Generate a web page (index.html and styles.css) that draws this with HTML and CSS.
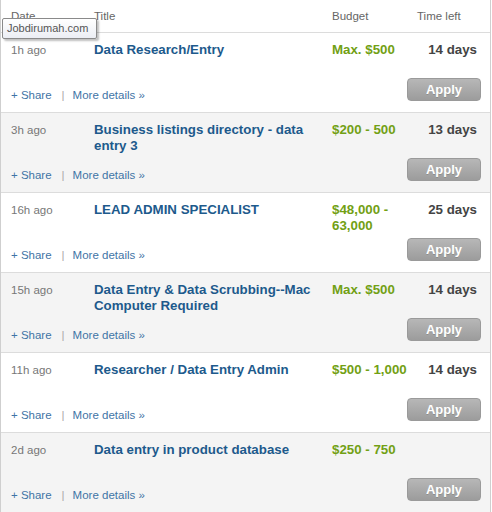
FILE: index.html
```html
<!DOCTYPE html>
<html>
<head>
<meta charset="utf-8">
<link rel="stylesheet" href="styles.css">
</head>
<body>
<div class="board">
  <div class="head">
    <div class="c-date">Date</div>
    <div class="c-title">Title</div>
    <div class="c-budget">Budget</div>
    <div class="c-time">Time left</div>
  </div>
  <div class="tip">Jobdirumah.com</div>

  <div class="job">
    <div class="top">
      <div class="c-date date">1h ago</div>
      <div class="c-title title">Data Research/Entry</div>
      <div class="c-budget budget">Max. $500</div>
      <div class="c-time days">14 days</div>
    </div>
    <div class="bottom">
      <div class="links"><a>+ Share</a><span class="sep">|</span><a>More details »</a></div>
      <button class="apply">Apply</button>
    </div>
  </div>

  <div class="job alt">
    <div class="top">
      <div class="c-date date">3h ago</div>
      <div class="c-title title">Business listings directory - data entry 3</div>
      <div class="c-budget budget">$200 - 500</div>
      <div class="c-time days">13 days</div>
    </div>
    <div class="bottom">
      <div class="links"><a>+ Share</a><span class="sep">|</span><a>More details »</a></div>
      <button class="apply">Apply</button>
    </div>
  </div>

  <div class="job">
    <div class="top">
      <div class="c-date date">16h ago</div>
      <div class="c-title title">LEAD ADMIN SPECIALIST</div>
      <div class="c-budget budget">$48,000 - 63,000</div>
      <div class="c-time days">25 days</div>
    </div>
    <div class="bottom">
      <div class="links"><a>+ Share</a><span class="sep">|</span><a>More details »</a></div>
      <button class="apply">Apply</button>
    </div>
  </div>

  <div class="job alt">
    <div class="top">
      <div class="c-date date">15h ago</div>
      <div class="c-title title">Data Entry &amp; Data Scrubbing--Mac Computer Required</div>
      <div class="c-budget budget">Max. $500</div>
      <div class="c-time days">14 days</div>
    </div>
    <div class="bottom">
      <div class="links"><a>+ Share</a><span class="sep">|</span><a>More details »</a></div>
      <button class="apply">Apply</button>
    </div>
  </div>

  <div class="job">
    <div class="top">
      <div class="c-date date">11h ago</div>
      <div class="c-title title">Researcher / Data Entry Admin</div>
      <div class="c-budget budget">$500 - 1,000</div>
      <div class="c-time days">14 days</div>
    </div>
    <div class="bottom">
      <div class="links"><a>+ Share</a><span class="sep">|</span><a>More details »</a></div>
      <button class="apply">Apply</button>
    </div>
  </div>

  <div class="job alt">
    <div class="top">
      <div class="c-date date">2d ago</div>
      <div class="c-title title">Data entry in product database</div>
      <div class="c-budget budget">$250 - 750</div>
      <div class="c-time days"></div>
    </div>
    <div class="bottom">
      <div class="links"><a>+ Share</a><span class="sep">|</span><a>More details »</a></div>
      <button class="apply">Apply</button>
    </div>
  </div>
</div>
</body>
</html>
```

FILE: styles.css
```css
* { box-sizing: border-box; }
html, body { margin: 0; padding: 0; background: #fff; }
body {
  font-family: "Liberation Sans", Arial, sans-serif;
  width: 492px;
  height: 512px;
  overflow: hidden;
}
.board {
  position: relative;
  width: 491px;
  border-left: 1px solid #cfcfcf;
  border-right: 1px solid #cfcfcf;
}
.head, .top {
  display: grid;
  grid-template-columns: 83px 238px 85px 64px;
  padding-left: 10px;
}
.head {
  height: 33px;
  border-bottom: 1px solid #dcdcdc;
  font-size: 11.5px;
  color: #666;
  line-height: 16px;
  padding-top: 8px;
}
.tip {
  position: absolute;
  left: 1px;
  top: 18px;
  width: 95px;
  height: 21px;
  border: 1px solid #8a8a8a;
  border-radius: 2px;
  background: linear-gradient(#ffffff, #eceef4);
  box-shadow: 2px 2px 2px rgba(0,0,0,0.25);
  font-size: 11px;
  line-height: 19px;
  color: #555;
  padding-left: 4px;
  white-space: nowrap;
}
.job {
  height: 80px;
  border-bottom: 1px solid #dcdcdc;
  padding: 9px 9px 10px 0;
  display: flex;
  flex-direction: column;
  justify-content: space-between;
}
.job.alt { background: #f4f4f4; }
.top { line-height: 16px; align-items: start; }
.date { font-size: 11.5px; color: #777; }
.title { font-size: 13.3px; font-weight: bold; color: #1d5a8c; padding-right: 8px; }
.budget { font-size: 13.3px; font-weight: bold; color: #72a014; padding-right: 4px; }
.days { font-size: 13.3px; font-weight: bold; color: #444; text-align: right; padding-right: 4px; }
.bottom {
  display: flex;
  justify-content: space-between;
  align-items: flex-end;
  padding-left: 10px;
}
.links { font-size: 11.5px; line-height: 13px; color: #3f74a6; }
.links a { color: #3f74a6; }
.sep { color: #aaa; margin: 0 8px 0 10px; }
.apply {
  width: 74px;
  height: 23px;
  margin-bottom: 1px;
  border: 1px solid #9a9a9a;
  border-radius: 4px;
  background: linear-gradient(#b7b7b7, #9c9c9c);
  color: #fff;
  font-family: "Liberation Sans", Arial, sans-serif;
  font-size: 13px;
  font-weight: bold;
  padding: 0;
  text-shadow: 0 1px 0 rgba(0,0,0,0.15);
}
```
